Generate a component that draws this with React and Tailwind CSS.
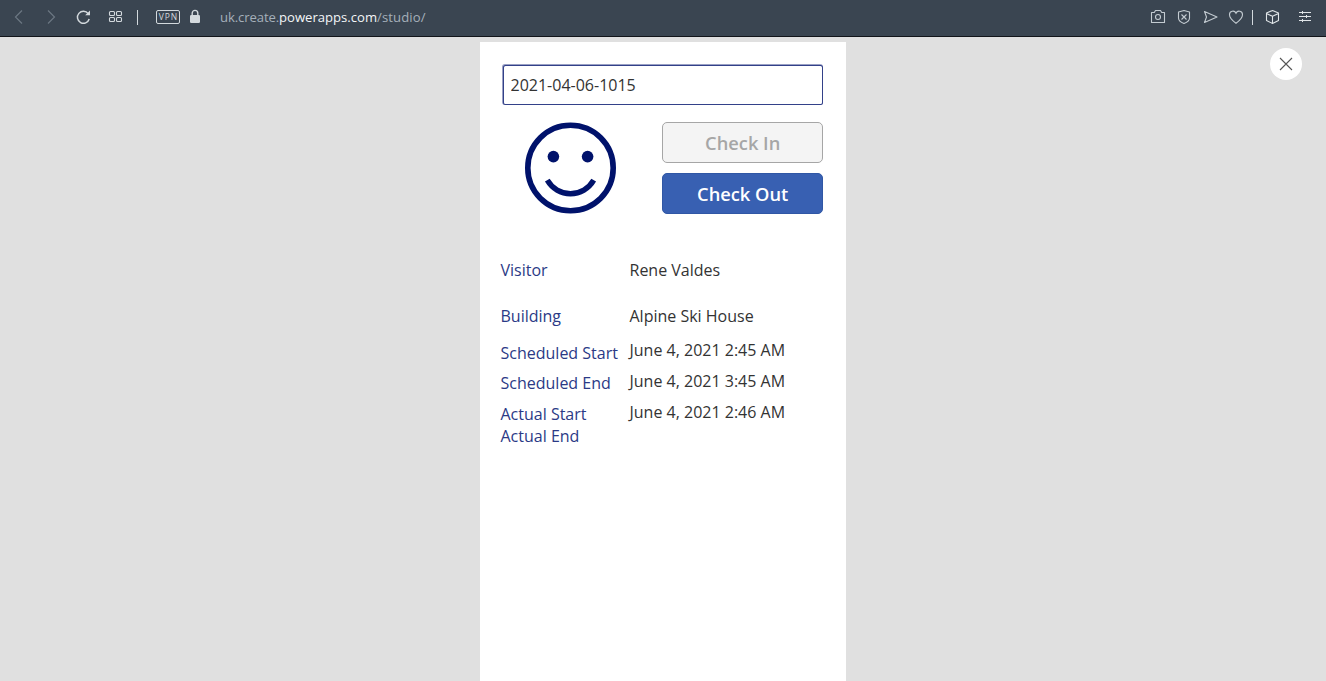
import React from "react";

const labels = [
  { text: "Visitor", cls: "h-[46px]" },
  { text: "Building", cls: "h-[37px]" },
  { text: "Scheduled Start", cls: "h-[30px]" },
  { text: "Scheduled End", cls: "h-[31px]" },
  { text: "Actual Start", cls: "h-[22px]" },
  { text: "Actual End", cls: "h-[22px]" },
];

const values = [
  { text: "Rene Valdes", cls: "h-[46px]" },
  { text: "Alpine Ski House", cls: "h-[34px]" },
  { text: "June 4, 2021 2:45 AM", cls: "h-[31px]" },
  { text: "June 4, 2021 3:45 AM", cls: "h-[31px]" },
  { text: "June 4, 2021 2:46 AM", cls: "h-[22px]" },
];

function Icon({ w = 16, h = 16, className = "", children, sw = 1 }) {
  return (
    <svg
      width={w}
      height={h}
      viewBox={`0 0 ${w} ${h}`}
      fill="none"
      stroke="currentColor"
      strokeWidth={sw}
      className={`shrink-0 ${className}`}
    >
      {children}
    </svg>
  );
}

function BrowserBar() {
  return (
    <header className="flex h-[37px] shrink-0 items-start justify-between border-b border-[#12151a] bg-[#3a4551] pt-[9px] text-[#d3d9dd]">
      <div className="flex h-4 items-center">
        <Icon className="ml-[11px] text-[#6b7782]" sw={1.2}>
          <path d="M11 1.5 4.5 8 11 14.5" />
        </Icon>
        <Icon className="ml-[16px] text-[#6b7782]" sw={1.2}>
          <path d="M5 1.5 11.5 8 5 14.5" />
        </Icon>
        <Icon className="ml-[16px]" sw={1.5}>
          <path d="M13.2 4.6A6 6 0 1 0 14.2 10" />
          <path d="M15 1.4v4.8h-4.8Z" fill="currentColor" stroke="none" />
        </Icon>
        <Icon className="ml-[17px]" sw={1.1}>
          <rect x="1.5" y="2.5" width="5" height="4" rx="1" />
          <rect x="8.5" y="2.5" width="5" height="4" rx="1" />
          <rect x="1.5" y="8.5" width="5" height="4" rx="1" />
          <rect x="8.5" y="8.5" width="5" height="4" rx="1" />
        </Icon>
        <span className="ml-[13px] h-[15px] w-px bg-[#d3d9dd]" />
        <span className="ml-[18px] flex h-[14px] w-6 items-center justify-center rounded-[2px] border border-[#d3d9dd] pl-px font-['Open_Sans',sans-serif] text-[8.5px] font-medium leading-none tracking-[0.9px]">
          VPN
        </span>
        <Icon w={12} h={16} className="ml-[9px]" sw={1.4}>
          <rect x="1" y="6" width="10" height="8" rx="1.3" fill="currentColor" stroke="none" />
          <path d="M3.2 6.5V4.2a2.8 2.8 0 0 1 5.6 0v2.3" />
        </Icon>
        <span className="ml-[19px] whitespace-nowrap font-['Open_Sans',sans-serif] text-[13.1px] leading-4 text-[#a5b0ba]">
          <span className="-tracking-[0.1px]">uk.create.</span>
          <span className="text-[#f4f6f8]">powerapps.com</span>
          <span className="tracking-[0.1px]">/studio/</span>
        </span>
      </div>
      <div className="flex h-4 items-center text-[#c3cbd1]">
        <Icon sw={1.1}>
          <path d="M1.5 3.5H4.3L5.5 1.5h5l1.2 2h2.8v10h-13Z" strokeLinejoin="round" />
          <circle cx="8" cy="8" r="2.5" />
        </Icon>
        <Icon className="ml-[10px]" sw={1.1}>
          <path d="M8 1.5 13.5 3v6c0 2.6-2.4 4.3-5.5 5.5C4.9 13.3 2.5 11.6 2.5 9V3Z" strokeLinejoin="round" />
          <path d="m5.5 5.5 5 5m0-5-5 5" />
        </Icon>
        <Icon className="ml-[10px]" sw={1.1}>
          <path d="M2.5 2.5 15 8 2.5 13.5 4.5 8Z" strokeLinejoin="round" />
        </Icon>
        <Icon className="ml-[10px]" sw={1.1}>
          <path d="M8 14.2C5 12 1.5 9 1.5 5.7a3.4 3.4 0 0 1 6.5-1.5 3.4 3.4 0 0 1 6.5 1.5C14.5 9 11 12 8 14.2Z" />
        </Icon>
        <span className="ml-[8px] h-[15px] w-px bg-[#d3d9dd]" />
        <Icon className="ml-[12px] text-[#e0e5e8]" sw={1.1}>
          <path d="M7.5 1.5 13.5 4v7.500l-6 3-6-3V4ZM1.5 4.500l6 2.800 6-2.800M7.500 7.300v7" strokeLinejoin="round" />
        </Icon>
        <Icon className="ml-[16px] mr-[13px] text-[#e0e5e8]">
          <path d="M2 3.500h12M2 7.500h12M2 11.500h12M5.500 2v3M9.500 6v3M5.500 10v3" />
        </Icon>
      </div>
    </header>
  );
}

function Smiley() {
  return (
    <svg width="92" height="92" viewBox="0 0 92 92" className="ml-[22px] shrink-0" fill="none" stroke="#00126b">
      <circle cx="46.5" cy="46" r="42.7" strokeWidth="5.6" />
      <circle cx="29.4" cy="34.6" r="5.8" fill="#00126b" stroke="none" />
      <circle cx="63.6" cy="34.6" r="5.8" fill="#00126b" stroke="none" />
      <path d="M23.3 58.2a26.700 26.700 0 0 0 46.400 0" strokeWidth="5.400" />
    </svg>
  );
}

export default function App() {
  return (
    <div className="flex h-[681px] w-full flex-col overflow-hidden bg-[#e0e0e0] font-['Open_Sans',sans-serif]">
      <BrowserBar />
      <div className="grid min-h-0 flex-1 grid-cols-[480px_366px_1fr]">
        <main className="col-start-2 mt-[5px] flex flex-col bg-white pt-[22px] pl-[22px] text-base">
          <div className="h-[41px] w-[321.4px] rounded-[3px] bg-[#00126b]/40 p-[0.5px]">
            <input
              className="h-full w-full rounded-[2.5px] border border-[#00126b]/80 bg-white pl-[7px] text-[#333] outline-none"
              defaultValue="2021-04-06-1015"
            />
          </div>
          <section className="mt-[17px] flex">
            <Smiley />
            <div className="ml-[46px] flex w-[161.4px] flex-col gap-[10px] text-[18.3px] font-semibold">
              <button disabled className="h-[41px] rounded-[5px] border border-[#a6a6a6] bg-[#f4f4f4] text-[#a6a6a6]">
                Check In
              </button>
              <button className="h-[41px] rounded-[5px] border border-[#3057a5] bg-[#3860b2] text-white">
                Check Out
              </button>
            </div>
          </section>
          <section className="mt-[45px] flex">
            <div className="-ml-[1.5px] w-[129px] text-[#2b3a86]">
              {labels.map((l) => (
                <div key={l.text} className={`whitespace-nowrap leading-[22px] ${l.cls}`}>{l.text}</div>
              ))}
            </div>
            <div className="text-[#333]">
              {values.map((v) => (
                <div key={v.text} className={`whitespace-nowrap leading-[22px] ${v.cls}`}>{v.text}</div>
              ))}
            </div>
          </section>
        </main>
        <aside className="flex justify-end pt-[11px] pr-6">
          <button aria-label="Close" className="flex h-8 w-8 items-center justify-center rounded-full bg-white text-[#555]">
            <Icon sw={1.1}>
              <path d="m2 2 12 12M14 2 2 14" />
            </Icon>
          </button>
        </aside>
      </div>
    </div>
  );
}
